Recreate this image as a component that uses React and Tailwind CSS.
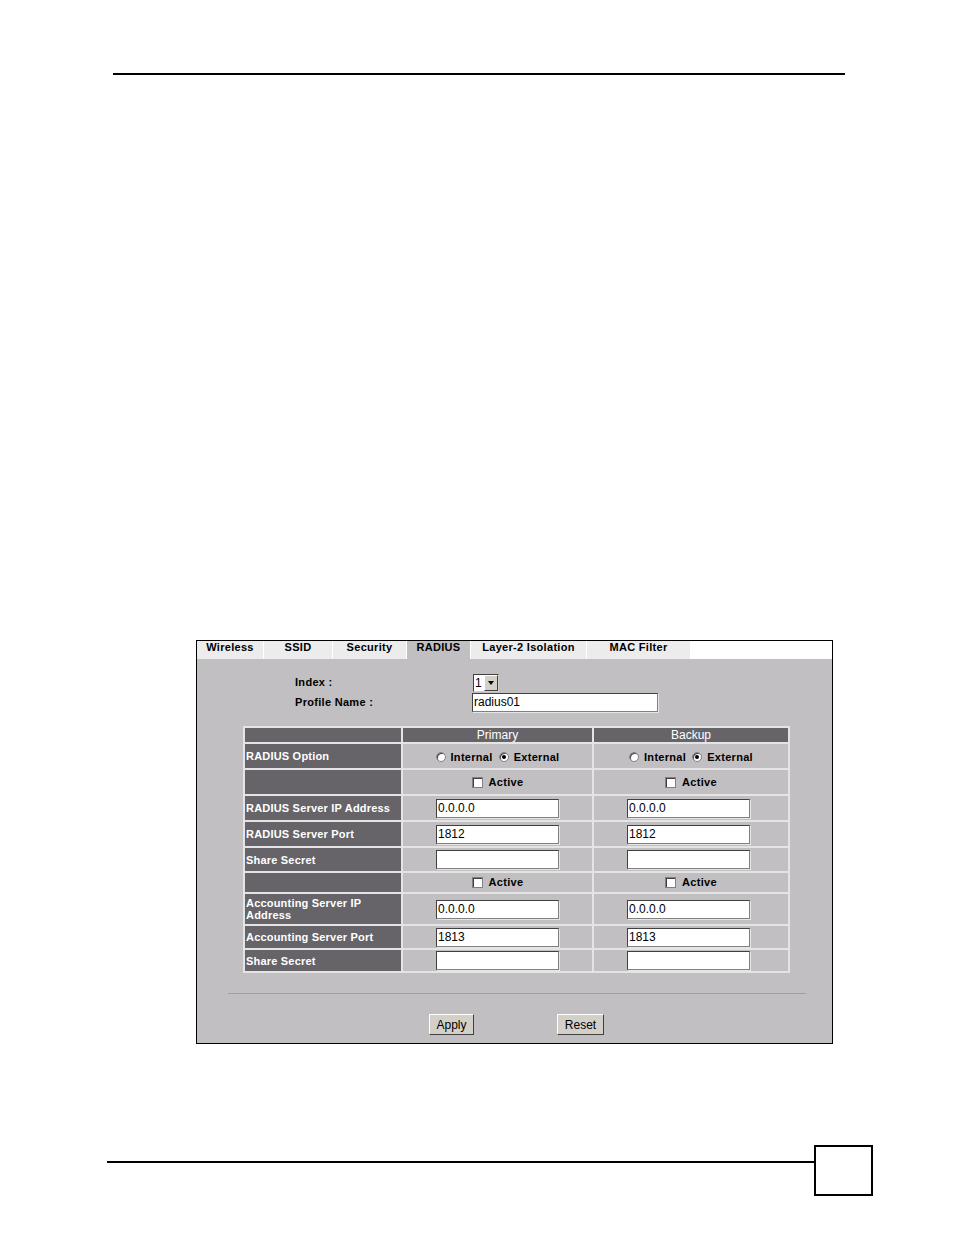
const font = { fontFamily: '"Liberation Sans", Arial, sans-serif' };

const tabs = [
  { name: "Wireless", w: "w-[66px]" },
  { name: "SSID", w: "w-[68px]" },
  { name: "Security", w: "w-[73px]" },
  { name: "RADIUS", w: "w-[63px]", active: true },
  { name: "Layer-2 Isolation", w: "w-[115px]" },
  { name: "MAC Filter", w: "w-[103px]" },
];

function Radio({ checked }) {
  return (
    <span className="inline-flex w-[10px] h-[10px] rounded-full bg-white border border-[#808080] shadow-[inset_1px_1px_0_#404040] items-center justify-center">
      {checked && <span className="w-[4px] h-[4px] rounded-full bg-black" />}
    </span>
  );
}

function Check() {
  return (
    <span className="inline-block w-[11px] h-[11px] bg-white border border-[#808080] shadow-[inset_1px_1px_0_#404040]" />
  );
}

function TextBox({ value, w = "w-[123px]" }) {
  return (
    <div
      className={`${w} h-[19px] bg-white border border-[#808080] border-t-[#404040] border-l-[#404040] shadow-[1px_1px_0_#e6e6e6] text-[12px] leading-[17px] pl-[1px] text-black`}
    >
      {value}
    </div>
  );
}

function Label({ children, h }) {
  return (
    <td className={`bg-[#666469] text-white font-bold text-[11px] leading-[12px] px-[1px] align-middle tracking-[0.2px] ${h}`}>
      {children}
    </td>
  );
}

function Cell({ children }) {
  return <td className="bg-[#c1bfc1] align-middle">{children}</td>;
}

function Options() {
  return (
    <div className="flex items-center justify-center gap-[5px] text-[11px] font-bold text-black tracking-[0.3px] pt-[2px]">
      <Radio />
      <span className="mr-[1px]">Internal</span>
      <Radio checked />
      <span>External</span>
    </div>
  );
}

function Active() {
  return (
    <div className="flex items-center justify-center gap-[6px] text-[11px] font-bold text-black tracking-[0.3px]">
      <Check />
      <span>Active</span>
    </div>
  );
}

function InputCell({ value }) {
  return (
    <div className="pl-[33px]">
      <TextBox value={value} />
    </div>
  );
}

export default function App() {
  return (
    <div className="w-[954px] h-[1235px] bg-white relative" style={font}>
      <div className="pt-[73px] pl-[113px]">
        <div className="w-[732px] h-[2px] bg-black" />
      </div>

      {/* config panel */}
      <div className="mt-[565px] ml-[196px] w-[637px] h-[404px] border border-black bg-[#c1bfc1] flex flex-col">
        <div className="flex h-[18px] bg-white">
          {tabs.map((t) => (
            <div
              key={t.name}
              className={`${t.w} h-[18px] mr-[1px] flex justify-center text-[11px] leading-[13px] font-bold text-black tracking-[0.3px] ${
                t.active ? "bg-[#c1bfc1]" : "bg-[#ececec]"
              }`}
            >
              {t.name}
            </div>
          ))}
        </div>

        <div className="pt-[15px] pl-[98px] flex flex-col gap-[3px]">
          <div className="flex items-center h-[17px]">
            <span className="w-[178px] text-[11px] font-bold tracking-[0.3px]">Index :</span>
            <div className="flex h-[18px] bg-white border border-[#404040] border-r-[#d0d0d0] border-b-[#d0d0d0]">
              <span className="w-[10px] text-[12px] leading-[16px] pl-[1px]">1</span>
              <span className="w-[14px] h-[16px] bg-[#d4d0c8] border border-white border-r-[#404040] border-b-[#404040] flex items-center justify-center">
                <span className="w-0 h-0 border-l-[3px] border-r-[3px] border-t-[4px] border-l-transparent border-r-transparent border-t-black" />
              </span>
            </div>
          </div>
          <div className="flex items-center h-[17px]">
            <span className="w-[177px] text-[11px] font-bold tracking-[0.3px]">Profile Name :</span>
            <TextBox value="radius01" w="w-[186px]" />
          </div>
        </div>

        <div className="pt-[15px] pl-[46px]">
          <table className="border-separate border-spacing-[2px] bg-[#e4e4e4] w-[547px]">
            <tbody>
              <tr>
                <td className="bg-[#666469] h-[14px] w-[156px]" />
                <td className="bg-[#666469] h-[14px] w-[189px] text-white text-[12px] leading-[14px] text-center">Primary</td>
                <td className="bg-[#666469] h-[14px] text-white text-[12px] leading-[14px] text-center">Backup</td>
              </tr>
              <tr>
                <Label h="h-[24px]">RADIUS Option</Label>
                <Cell><Options /></Cell>
                <Cell><Options /></Cell>
              </tr>
              <tr>
                <Label h="h-[24px]" />
                <Cell><Active /></Cell>
                <Cell><Active /></Cell>
              </tr>
              <tr>
                <Label h="h-[24px]">RADIUS Server IP Address</Label>
                <Cell><InputCell value="0.0.0.0" /></Cell>
                <Cell><InputCell value="0.0.0.0" /></Cell>
              </tr>
              <tr>
                <Label h="h-[24px]">RADIUS Server Port</Label>
                <Cell><InputCell value="1812" /></Cell>
                <Cell><InputCell value="1812" /></Cell>
              </tr>
              <tr>
                <Label h="h-[23px]">Share Secret</Label>
                <Cell><InputCell value="" /></Cell>
                <Cell><InputCell value="" /></Cell>
              </tr>
              <tr>
                <Label h="h-[19px]" />
                <Cell><Active /></Cell>
                <Cell><Active /></Cell>
              </tr>
              <tr>
                <Label h="h-[30px]">
                  Accounting Server IP
                  <br />
                  Address
                </Label>
                <Cell><InputCell value="0.0.0.0" /></Cell>
                <Cell><InputCell value="0.0.0.0" /></Cell>
              </tr>
              <tr>
                <Label h="h-[22px]">Accounting Server Port</Label>
                <Cell><InputCell value="1813" /></Cell>
                <Cell><InputCell value="1813" /></Cell>
              </tr>
              <tr>
                <Label h="h-[21px]">Share Secret</Label>
                <Cell><InputCell value="" /></Cell>
                <Cell><InputCell value="" /></Cell>
              </tr>
            </tbody>
          </table>
        </div>

        <div className="mt-[20px] ml-[31px] w-[578px] h-[1px] bg-[#a0a0a0]" />

        <div className="mt-[20px] flex pl-[232px] gap-[83px]">
          <button className="w-[45px] h-[21px] bg-[#d4d0c8] border border-white border-r-[#404040] border-b-[#404040] text-[12px] text-black">
            Apply
          </button>
          <button className="w-[47px] h-[21px] bg-[#d4d0c8] border border-white border-r-[#404040] border-b-[#404040] text-[12px] text-black">
            Reset
          </button>
        </div>
      </div>

      {/* footer */}
      <div className="mt-[101px] ml-[107px] flex items-start">
        <div className="w-[707px] h-[2px] bg-black mt-[16px]" />
        <div className="w-[59px] h-[51px] border-2 border-black" />
      </div>
    </div>
  );
}
